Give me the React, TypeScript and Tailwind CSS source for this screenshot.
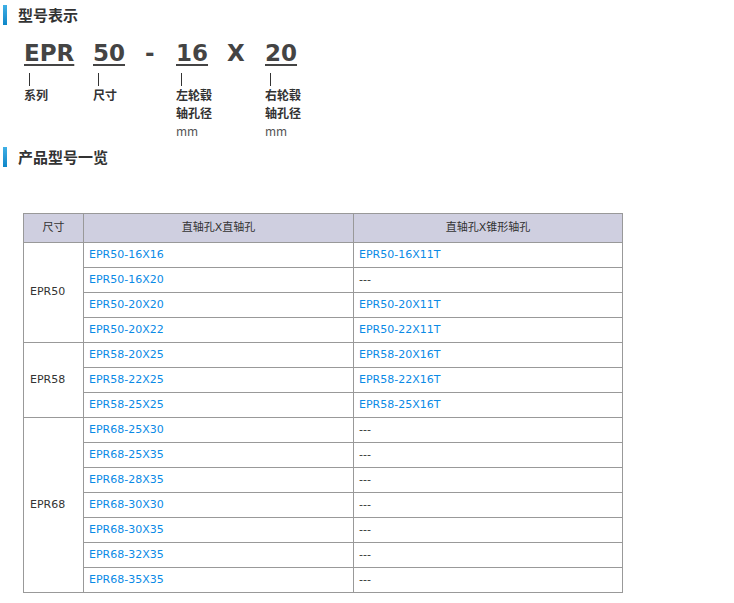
import React from "react";

const groups = [
  { name: "EPR50", rows: [["EPR50-16X16","EPR50-16X11T"],["EPR50-16X20","---"],["EPR50-20X20","EPR50-20X11T"],["EPR50-20X22","EPR50-22X11T"]] },
  { name: "EPR58", rows: [["EPR58-20X25","EPR58-20X16T"],["EPR58-22X25","EPR58-22X16T"],["EPR58-25X25","EPR58-25X16T"]] },
  { name: "EPR68", rows: [["EPR68-25X30","---"],["EPR68-25X35","---"],["EPR68-28X35","---"],["EPR68-30X30","---"],["EPR68-30X35","---"],["EPR68-32X35","---"],["EPR68-35X35","---"]] },
];

const font = { fontFamily: '"Noto Sans CJK SC", "Liberation Sans", sans-serif' };
const tfont = { fontFamily: '"DejaVu Sans", "Noto Sans CJK SC", sans-serif' };

function Title({ t }: { t: string }) {
  return (
    <div className="flex items-center h-[20px]">
      <div className="w-[4px] h-[20px] bg-gradient-to-b from-[#3fb0e6] to-[#0a86c8] ml-[3px]" />
      <div className="ml-[11px] text-[15px] font-bold text-[#333]">{t}</div>
    </div>
  );
}

function Part({ big, w, label, u = true }: { big: string; w: string; label?: string[]; u?: boolean }) {
  return (
    <div className={`flex flex-col shrink-0 ${w}`}>
      <div
        className={`self-start text-[23px] font-bold text-[#444] leading-[28px] ${u ? "underline underline-offset-[3px] decoration-[2px]" : ""}`}
        style={{ fontFamily: '"DejaVu Sans", sans-serif' }}
      >
        {big}
      </div>
      {label && <div className="mt-[6px] ml-[5px] w-[1px] h-[13px] bg-[#333]" />}
      {label && label.map((l, i) => (
        <div key={i} className={`text-[12px] leading-[18px] ${l === "mm" ? "text-[#555] font-normal" : "font-bold text-[#333]"}`}>{l}</div>
      ))}
    </div>
  );
}

export default function App() {
  return (
    <div className="w-[734px] h-[603px] bg-white" style={font}>
      <div className="pt-[5px]"><Title t="型号表示" /></div>
      <div className="flex mt-[14px] ml-[24px]">
        <Part big="EPR" w="w-[69px]" label={["系列"]} />
        <Part big="50" w="w-[52px]" label={["尺寸"]} />
        <Part big="-" w="w-[31px]" u={false} />
        <Part big="16" w="w-[51px]" label={["左轮毂", "轴孔径", "mm"]} />
        <Part big="X" w="w-[38px]" u={false} />
        <Part big="20" w="w-[51px]" label={["右轮毂", "轴孔径", "mm"]} />
      </div>
      <div className="mt-[7px]"><Title t="产品型号一览" /></div>
      <table className="ml-[23px] mt-[46px] border-collapse text-[11px] w-[600px]" style={tfont}>
        <thead>
          <tr className="bg-[#cfcfe0] h-[29px] text-[#333]">
            <th className="border border-[#999] font-normal w-[60px]">尺寸</th>
            <th className="border border-[#999] font-normal w-[270px]">直轴孔X直轴孔</th>
            <th className="border border-[#999] font-normal">直轴孔X锥形轴孔</th>
          </tr>
        </thead>
        <tbody>
          {groups.map((g) =>
            g.rows.map((r, i) => (
              <tr key={g.name + i} className="h-[25px]">
                {i === 0 && (
                  <td rowSpan={g.rows.length} className="border border-[#999] pl-[6px] text-[#333]">{g.name}</td>
                )}
                <td className="border border-[#999] pl-[5px] text-[#0a8ae6]">{r[0]}</td>
                <td className={`border border-[#999] pl-[5px] ${r[1] === "---" ? "text-[#333]" : "text-[#0a8ae6]"}`}>{r[1]}</td>
              </tr>
            ))
          )}
        </tbody>
      </table>
    </div>
  );
}
